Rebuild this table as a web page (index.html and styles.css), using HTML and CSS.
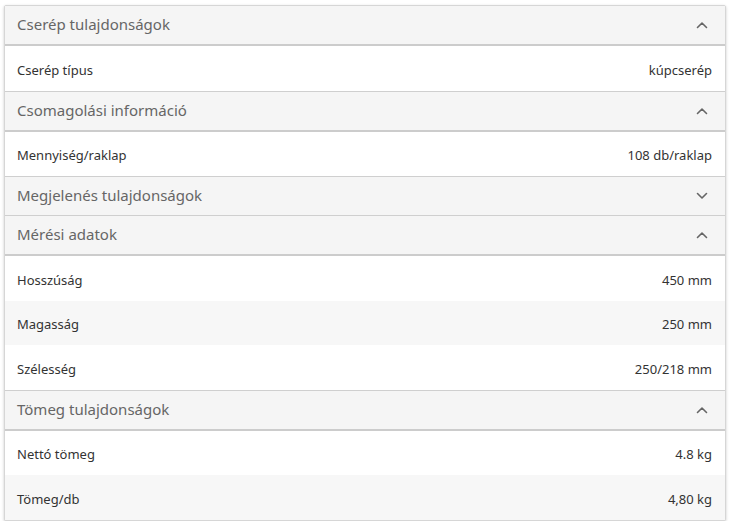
FILE: index.html
```html
<!DOCTYPE html>
<html lang="hu">
<head>
<meta charset="utf-8">
<link rel="stylesheet" href="styles.css">
</head>
<body>
<div class="panel">
  <section class="group open">
    <div class="head"><span>Cserép tulajdonságok</span><svg class="chev" viewBox="0 0 12 8"><path d="M1.5 6.5L6 2l4.5 4.5"/></svg></div>
    <div class="row"><span>Cserép típus</span><span>kúpcserép</span></div>
  </section>
  <section class="group open">
    <div class="head"><span>Csomagolási információ</span><svg class="chev" viewBox="0 0 12 8"><path d="M1.5 6.5L6 2l4.5 4.5"/></svg></div>
    <div class="row"><span>Mennyiség/raklap</span><span>108 db/raklap</span></div>
  </section>
  <section class="group closed">
    <div class="head"><span>Megjelenés tulajdonságok</span><svg class="chev" viewBox="0 0 12 8"><path d="M1.5 1.5L6 6l4.5-4.5"/></svg></div>
  </section>
  <section class="group open">
    <div class="head"><span>Mérési adatok</span><svg class="chev" viewBox="0 0 12 8"><path d="M1.5 6.5L6 2l4.5 4.5"/></svg></div>
    <div class="row"><span>Hosszúság</span><span>450 mm</span></div>
    <div class="row"><span>Magasság</span><span>250 mm</span></div>
    <div class="row"><span>Szélesség</span><span>250/218 mm</span></div>
  </section>
  <section class="group open last">
    <div class="head"><span>Tömeg tulajdonságok</span><svg class="chev" viewBox="0 0 12 8"><path d="M1.5 6.5L6 2l4.5 4.5"/></svg></div>
    <div class="row"><span>Nettó tömeg</span><span>4.8 kg</span></div>
    <div class="row"><span>Tömeg/db</span><span>4,80 kg</span></div>
  </section>
</div>
</body>
</html>
```

FILE: styles.css
```css
html, body {
  margin: 0;
  padding: 0;
  background: #fff;
}
body {
  padding: 5px 4px 0 4px;
  font-family: "Noto Sans", "Open Sans", sans-serif;
}
.panel {
  width: 722px;
  box-sizing: border-box;
  border: 1px solid #d6d6d6;
  box-shadow: 0 1px 3px rgba(0,0,0,0.22);
  border-radius: 2px;
  background: #fff;
}
.group {
  border-bottom: 1px solid #cfcfcf;
}
.group.last {
  border-bottom: none;
}
.head {
  height: 38px;
  box-sizing: border-box;
  padding: 0 17px 2px 12px;
  display: flex;
  align-items: center;
  justify-content: space-between;
  background: #f5f5f5;
  color: #666;
  font-size: 15px;
}
.open .head {
  border-bottom: 2px solid #cccccc;
  height: 40px;
}
.chev {
  width: 12px;
  height: 8px;
  margin-top: 2px;
  fill: none;
  stroke: #666;
  stroke-width: 1.6;
  stroke-linecap: round;
  stroke-linejoin: round;
}
.row {
  height: 44.5px;
  box-sizing: border-box;
  padding: 3px 13px 0 12px;
  display: flex;
  align-items: center;
  justify-content: space-between;
  color: #333;
  font-size: 13px;
}
.row:nth-child(odd) {
  background: #f7f7f7;
}
```
